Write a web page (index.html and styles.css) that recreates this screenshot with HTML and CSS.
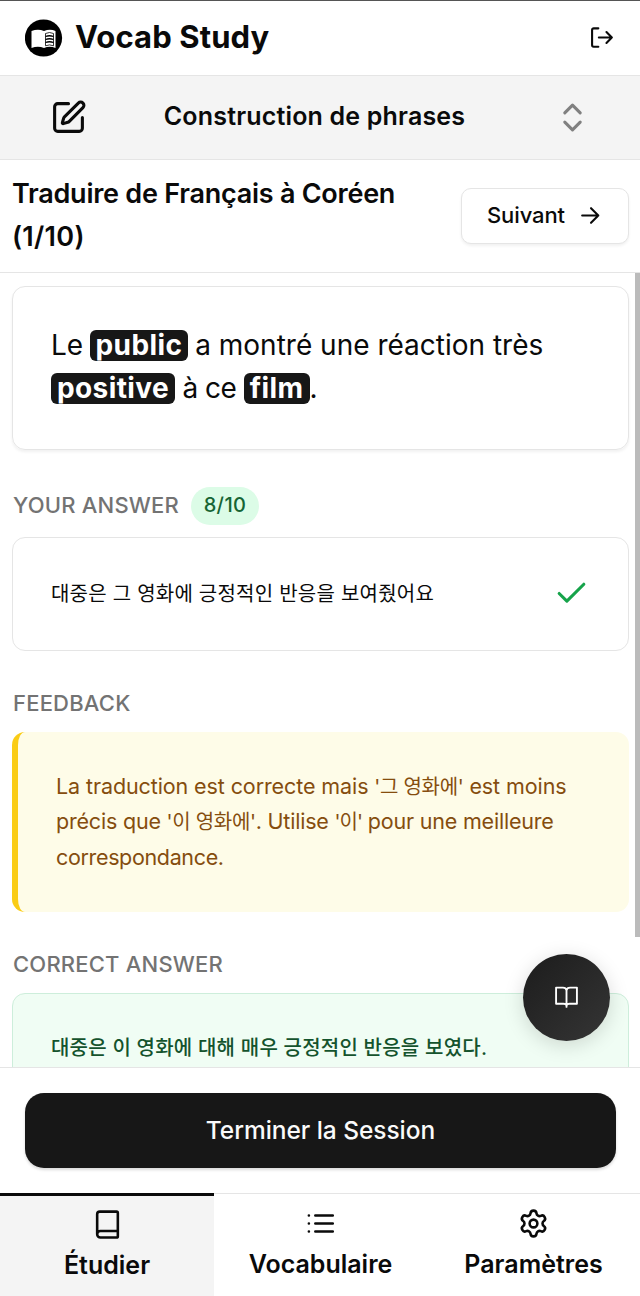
FILE: index.html
```html
<!DOCTYPE html>
<html lang="fr">
<head>
    <meta charset="UTF-8">
    <meta name="viewport" content="width=device-width, initial-scale=1.0">
    <title>Vocab Study</title>
    <link rel="stylesheet" href="styles.css">
</head>
<body>
    <div class="app">
        <header class="header">
            <svg class="logo" viewBox="0 0 38 38">
                <circle cx="18.500" cy="19" r="18.600" fill="#000"/>
                <path d="M6.500 12q6.500-2.500 12.500 0 6-2.500 11.500 0v17q-6-2.500-11.500 0-6-2.500-12.500 0z" fill="#fff"/>
                <path d="M20.500 14.500q4-2 8 0v12.300q-4-1.800-8 0z" fill="none" stroke="#000" stroke-width=".8"/>
                <path d="M20.500 17.500q4-1.500 8 0M20.500 20.500q4-1.500 8 0M20.500 23.500q4-1.500 8 0" fill="none" stroke="#000" stroke-width="1.300"/>
            </svg>
            <h1>Vocab Study</h1>
            <svg class="icon logout" viewBox="0 0 24 24" stroke-width="2">
                <path d="M8 3.200H3.500A1.500 1.500 0 0 0 2 4.700v14.600a1.500 1.500 0 0 0 1.500 1.500H8"/>
                <path d="M8.500 12h12.500M15.800 6.800 21 12l-5.200 5.200"/>
            </svg>
        </header>

        <div class="mode">
            <svg class="icon mode-icon" viewBox="0 0 24 24" stroke-width="2">
                <path d="M12 3H5a2 2 0 0 0-2 2v14a2 2 0 0 0 2 2h14a2 2 0 0 0 2-2v-7"/>
                <path d="M18.375 2.625a1 1 0 0 1 3 3l-9.013 9.014a2 2 0 0 1-.853.505l-2.873.840a.5.5 0 0 1-.620-.620l.840-2.873a2 2 0 0 1 .506-.852z"/>
            </svg>
            <span class="mode-name">Construction de phrases</span>
            <svg class="icon chevrons" viewBox="0 0 24 24" stroke-width="2">
                <path d="m7 15 5 5 5-5M7 9l5-5 5 5"/>
            </svg>
        </div>

        <div class="progress">
            <h2>Traduire de Français à Coréen<br><span class="count">(1/10)</span></h2>
            <button class="next">
                <span>Suivant</span>
                <svg class="icon arrow" viewBox="0 0 24 24" stroke-width="2">
                    <path d="M4 12h15.500M12.500 5l7 7-7 7"/>
                </svg>
            </button>
        </div>

        <main class="content">
            <div class="card sentence">
                <span class="line-1">Le <mark>public</mark> a montré une réaction très</span><br>
                <span class="line-2"><mark>positive</mark> à ce <mark>film</mark>.</span>
            </div>

            <h3 class="label label-answer">YOUR ANSWER <span class="score">8/10</span></h3>
            <div class="card answer">
                <span class="korean">대중은 그 영화에 긍정적인 반응을 보여줬어요</span>
                <svg class="icon check" viewBox="0 0 24 24" stroke-width="2">
                    <path d="M20 6 9 17l-5-5"/>
                </svg>
            </div>

            <h3 class="label">FEEDBACK</h3>
            <div class="feedback">
                <span class="fb-1">La traduction est correcte mais <span class="quote">'그 영화에'</span> est moins</span><br>
                <span class="fb-2">précis que <span class="quote">'이 영화에'</span>. Utilise <span class="quote quote-short">'이'</span> pour une meilleure</span><br>
                <span class="fb-3">correspondance.</span>
            </div>

            <h3 class="label">CORRECT ANSWER</h3>
            <div class="card correct">
                <span class="korean">대중은 이 영화에 대해 매우 긍정적인 반응을 보였다.</span>
            </div>
            <div class="scrollbar"></div>
        </main>

        <button class="fab">
            <svg class="icon" viewBox="0 0 24 24" stroke-width="1.800">
                <path d="M2 2.500h6.500A3.500 3 0 0 1 12 5a3.500 3 0 0 1 3.500-2.500H22V18h-7a3 2 0 0 0-3 2 3 2 0 0 0-3-2H2zM12 5v16"/>
            </svg>
        </button>

        <div class="finish">
            <button>Terminer la Session</button>
        </div>

        <nav class="tabs">
            <a class="tab active">
                <svg class="icon" viewBox="0 0 24 24" stroke-width="2">
                    <path d="M4 19.500V4a2 2 0 0 1 2-2h13a1 1 0 0 1 1 1v18a1 1 0 0 1-1 1H6.500a2.500 2.500 0 0 1 0-5H20"/>
                </svg>
                <span>Étudier</span>
            </a>
            <a class="tab">
                <svg class="icon" viewBox="0 0 24 24" stroke-width="2">
                    <path d="M3 5.800h.01M3 12h.01M3 18.200h.01M8 5.800h13.500M8 12h13.500M8 18.200h13.500"/>
                </svg>
                <span>Vocabulaire</span>
            </a>
            <a class="tab">
                <svg class="icon" viewBox="0 0 24 24" stroke-width="2">
                    <path d="M9.671 4.136a2.340 2.340 0 0 1 4.659 0 2.340 2.340 0 0 0 3.319 1.915 2.340 2.340 0 0 1 2.330 4.033 2.340 2.340 0 0 0 0 3.831 2.340 2.340 0 0 1-2.330 4.033 2.340 2.340 0 0 0-3.319 1.915 2.340 2.340 0 0 1-4.659 0 2.340 2.340 0 0 0-3.320-1.915 2.340 2.340 0 0 1-2.330-4.033 2.340 2.340 0 0 0 0-3.831A2.340 2.340 0 0 1 6.350 6.051a2.340 2.340 0 0 0 3.319-1.915"/>
                    <circle cx="12" cy="12" r="3"/>
                </svg>
                <span>Paramètres</span>
            </a>
        </nav>
    </div>
</body>
</html>
```

FILE: styles.css
```css
* {
    margin: 0;
    padding: 0;
    box-sizing: border-box;
}

body {
    font-family: Inter, "Noto Sans CJK KR", sans-serif;
    background: white;
    color: #0a0a0a;
}

button {
    font-family: inherit;
    border: none;
}

.app {
    position: relative;
    display: flex;
    flex-direction: column;
    width: 640px;
    height: 1296px;
    overflow: hidden;
    border-top: 1px solid #555;
}

.icon {
    flex: none;
    width: 31px;
    height: 31px;
    fill: none;
    stroke: currentColor;
    stroke-linecap: round;
    stroke-linejoin: round;
}

/* Header */
.header {
    display: flex;
    align-items: center;
    height: 75px;
    padding: 0 25px;
    border-bottom: 1px solid #e5e5e5;
}

.logo {
    width: 38px;
    height: 38px;
    margin-right: 12px;
}

.header h1 {
    flex: 1;
    padding-bottom: 2px;
    font-size: 31px;
    font-weight: 700;
    letter-spacing: 0.1px;
    white-space: nowrap;
}

.logout {
    width: 25px;
    height: 25px;
}

.mode {
    display: flex;
    align-items: center;
    justify-content: space-between;
    height: 84px;
    padding: 0 49px 0 50px;
    background: #f4f4f4;
    border-bottom: 1px solid #e5e5e5;
}

.mode-icon,
.chevrons {
    width: 37px;
    height: 37px;
}

.chevrons {
    color: #808080;
}

.mode-name {
    margin-right: 12px;
    padding-bottom: 2px;
    font-size: 25px;
    font-weight: 600;
    letter-spacing: 0.18px;
}

.progress {
    display: flex;
    align-items: center;
    justify-content: space-between;
    height: 113px;
    padding: 0 11px 0 12px;
    border-bottom: 1px solid #e5e5e5;
}

.progress h2 {
    padding-bottom: 1px;
    font-size: 27px;
    font-weight: 600;
    letter-spacing: -0.25px;
    line-height: 43px;
    white-space: nowrap;
}

.count {
    letter-spacing: 0.3px;
}

.next {
    display: flex;
    align-items: center;
    justify-content: space-between;
    width: 168px;
    height: 56px;
    padding: 0 25px;
    font-size: 22px;
    font-weight: 500;
    letter-spacing: -0.1px;
    color: #0a0a0a;
    background: white;
    border: 1px solid #e5e5e5;
    border-radius: 10px;
    box-shadow: 0 2px 3px rgba(0, 0, 0, 0.06);
}

.next span {
    padding-bottom: 1px;
}

.arrow {
    width: 25px;
    height: 25px;
}

/* Exercise */
.content {
    position: relative;
    height: 795px;
    padding: 13px 11px 0 12px;
    overflow: hidden;
}

.card {
    border: 1px solid #e5e5e5;
    border-radius: 13px;
    padding: 0 38px;
}

.sentence {
    height: 164px;
    padding-top: 37px;
    font-size: 28px;
    line-height: 43.500px;
    box-shadow: 0 2px 3px rgba(0, 0, 0, 0.06);
    white-space: nowrap;
}

.sentence mark {
    display: inline-block;
    padding: 0 6px;
    color: white;
    background: #171717;
    border-radius: 6px;
    font-weight: 700;
    line-height: 31px;
    letter-spacing: 0.4px;
}

.line-1 mark {
    margin: 0 -1px 0 -1.500px;
}

.line-2 {
    letter-spacing: -0.5px;
}

.label {
    display: flex;
    align-items: center;
    margin: 37px 0 13px;
    padding-left: 1px;
    font-size: 22px;
    font-weight: 500;
    letter-spacing: 0.2px;
    color: #737373;
    line-height: 31px;
    white-space: nowrap;
}

.label-answer {
    height: 38px;
    margin-bottom: 12px;
}

.score {
    width: 68px;
    height: 38px;
    margin-left: 12px;
    border-radius: 19px;
    background: #dcfce7;
    color: #166534;
    font-size: 20px;
    letter-spacing: 0.4px;
    line-height: 37px;
    text-align: center;
}

.answer {
    display: flex;
    align-items: center;
    justify-content: space-between;
    height: 114px;
}

.korean {
    font-size: 20px;
    letter-spacing: 0.22px;
    white-space: nowrap;
}

.answer .korean {
    padding-bottom: 2px;
}

.check {
    width: 37px;
    height: 37px;
    color: #16a34a;
}

.feedback {
    height: 180px;
    padding: 37px 37px 0 38px;
    border-left: 6px solid #facc15;
    border-radius: 13px;
    background: #fefce8;
    color: #854d0e;
    font-size: 21.500px;
    line-height: 35.500px;
    white-space: nowrap;
}

.fb-1 {
    letter-spacing: -0.1px;
}

.fb-2 {
    letter-spacing: -0.2px;
}

.fb-3 {
    letter-spacing: -0.35px;
}

.quote {
    font-size: 20px;
    line-height: 1;
    letter-spacing: -0.3px;
}

.quote-short {
    letter-spacing: -1px;
}

.correct {
    height: 114px;
    padding-top: 38px;
    background: #f0fdf4;
    border-color: #cdeedb;
    color: #14532d;
    font-weight: 500;
}

.scrollbar {
    position: absolute;
    top: 0;
    right: 0;
    width: 5px;
    height: 664px;
    background: #bbb;
}

.fab {
    position: absolute;
    left: 523px;
    top: 953px;
    display: flex;
    align-items: center;
    justify-content: center;
    width: 87px;
    height: 87px;
    border-radius: 50%;
    background: linear-gradient(135deg, #1c1c1c, #353535);
    color: white;
    box-shadow: 0 4px 20px rgba(0, 0, 0, 0.15);
}

.fab .icon {
    width: 25px;
    height: 25px;
}

/* Bottom bar */
.finish {
    height: 126px;
    padding: 25px 24px 0 25px;
    background: white;
    border-top: 1px solid #e5e5e5;
}

.finish button {
    width: 100%;
    height: 75px;
    padding-bottom: 1px;
    border-radius: 19px;
    background: #171717;
    color: #fafafa;
    font-size: 24.500px;
    font-weight: 500;
    letter-spacing: -0.05px;
    box-shadow: 0 2px 3px rgba(0, 0, 0, 0.15);
}

.tabs {
    display: grid;
    grid-template-columns: 214px 213px 213px;
    height: 103px;
}

.tab {
    display: flex;
    flex-direction: column;
    align-items: center;
    gap: 7px;
    padding-top: 14px;
    border-top: 1px solid #e5e5e5;
    font-size: 25px;
    font-weight: 600;
    line-height: 37px;
}

.tab.active {
    gap: 7px;
    padding-top: 13px;
    border-top: 3px solid #0a0a0a;
    background: #f4f4f4;
}
```
